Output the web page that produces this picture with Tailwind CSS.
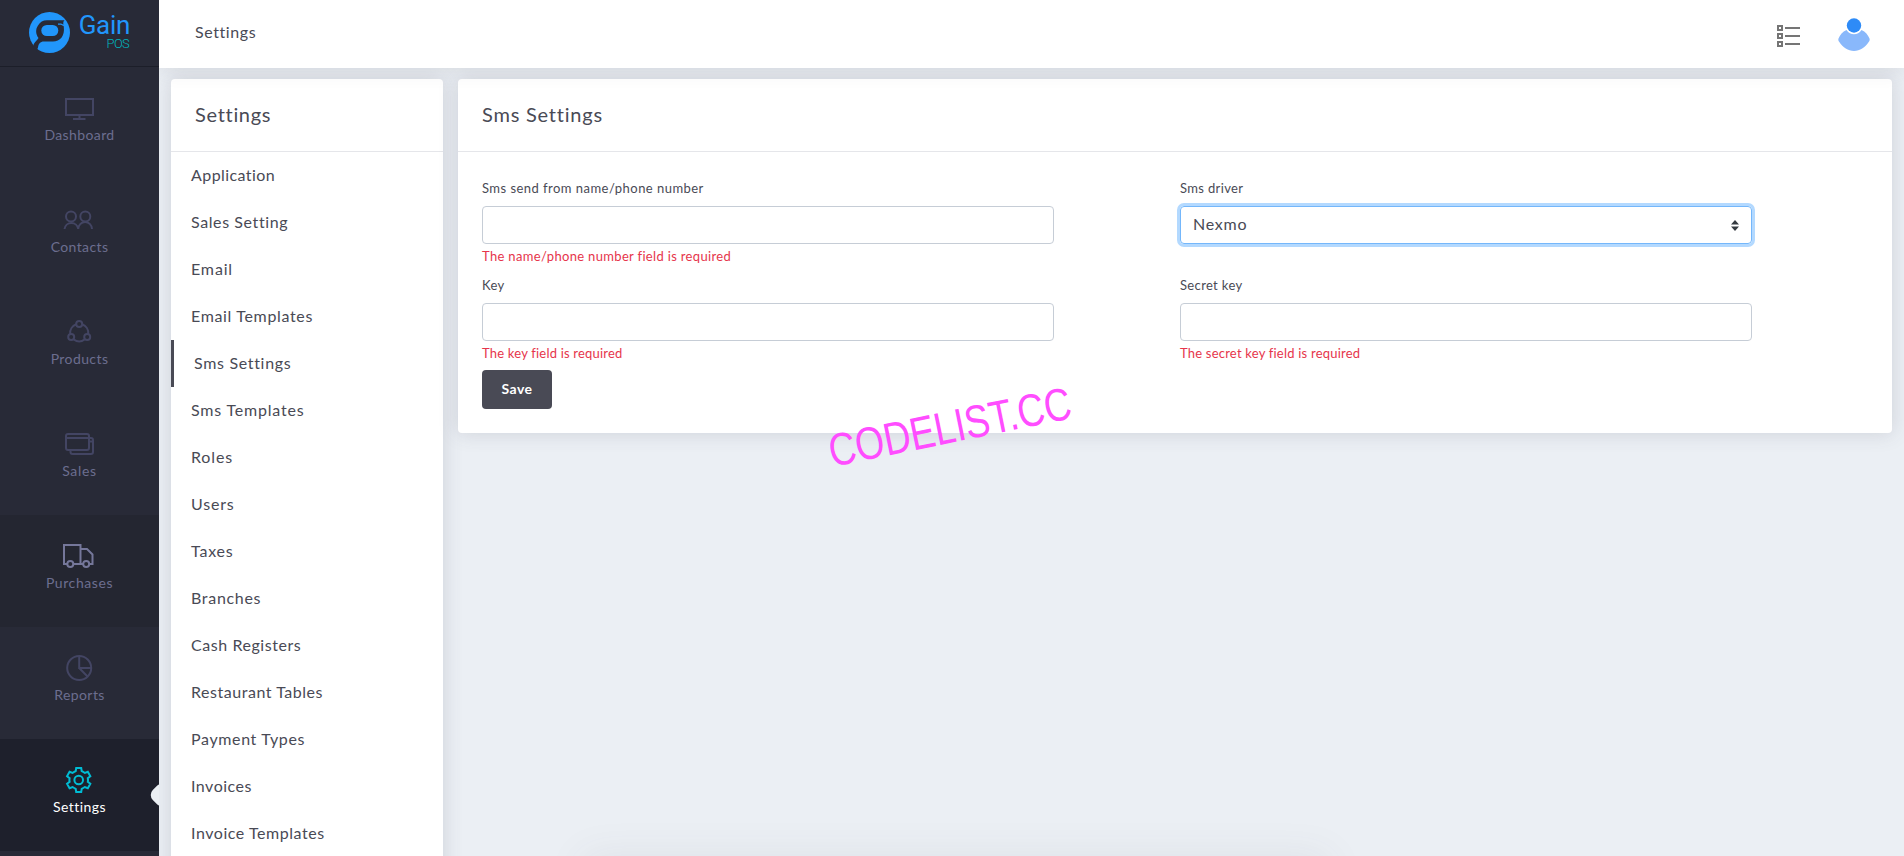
<!DOCTYPE html>
<html lang="en">
<head>
<meta charset="utf-8">
<title>Gain POS - Settings</title>
<script src="https://cdn.jsdelivr.net/npm/@tailwindcss/browser@4"></script>
</head>
<body class="bg-[#ebeff4] font-[Lato,sans-serif] text-[#494a55] [font-variant-ligatures:none]">
<div class="relative flex h-[856px] w-[1904px] overflow-hidden">
  <aside class="relative z-20 flex w-[159px] shrink-0 flex-col overflow-hidden bg-[#282a37] text-sm leading-5 text-[#6c6e8f]">
    <div class="flex h-[67px] shrink-0 items-start border-b border-[#1c1e29] pt-3 pl-[29px]">
      <svg class="h-[41px] w-[41px]" viewBox="0 0 41 41"><circle cx="20.500" cy="20.500" r="20.500" fill="#2196fb"/><path d="M4.500 34C4 31 8 29 9.500 26C6.500 22 6.500 17 9 13.500C11 10 14 8.200 18 8.200H35.500C34 9 34 11.500 34.800 15C36 24 31 29.500 24 29.500H15C11 29.500 9.500 32 9 35.500L7 40H0Z" fill="#282a37"/><rect x="12.300" y="13" width="17" height="11" rx="5.500" fill="#2196fb"/><path d="M29 12.200H32.200C34.500 13.500 36 13.500 36.500 13" fill="none" stroke="#2196fb" stroke-width="1.200"/></svg>
      <div class="ml-2 flex w-[52px] flex-col items-end font-[Roboto,sans-serif]">
        <span class="text-[26px] leading-[27px] tracking-[-0.3px] text-[#2196fb]">Gain</span>
        <span class="-mt-0.5 mr-px text-[13px] leading-[14px] font-light tracking-[-0.7px] text-[#00b3bd]">POS</span>
      </div>
    </div>
    <a class="flex h-28 shrink-0 flex-col items-center pt-[25px]">
      <svg class="h-8 w-[33px]" viewBox="0 0 33 32" fill="none" stroke="#434563" stroke-width="2"><path d="M3 7H30V23H3ZM16.500 24V27M10 27H22.500"/></svg>
      <span class="mt-px tracking-[0.39px]">Dashboard</span></a>
    <a class="flex h-28 shrink-0 flex-col items-center pt-[25px]">
      <svg class="h-8 w-[33px]" viewBox="0 0 33 32" fill="none" stroke="#434563" stroke-width="2"><circle cx="8" cy="12.500" r="5"/><circle cx="22.300" cy="12.500" r="5"/><path d="M1.500 25A6.900 6.900 0 0 1 15.200 25A6.900 6.900 0 0 1 29 25"/></svg>
      <span class="mt-px tracking-[0.39px]">Contacts</span></a>
    <a class="flex h-28 shrink-0 flex-col items-center pt-[25px]">
      <svg class="h-8 w-[33px]" viewBox="0 0 33 32" fill="none" stroke="#434563" stroke-width="2"><circle cx="16.200" cy="8" r="3"/><circle cx="8.200" cy="21" r="3"/><circle cx="24.200" cy="21" r="3"/><path d="M13.200 8.300A9.400 9.400 0 0 0 7.200 18M19.200 8.300A9.400 9.400 0 0 1 25.200 18M10.800 23.500A9 9 0 0 0 21.600 23.500"/></svg>
      <span class="mt-px tracking-[0.41px]">Products</span></a>
    <a class="flex h-28 shrink-0 flex-col items-center pt-[25px]">
      <svg class="h-8 w-[33px]" viewBox="0 0 33 32" fill="none" stroke="#434563" stroke-width="2"><rect x="3" y="6" width="23" height="16" rx="2"/><path d="M4 10H25M26 10H28Q30 10 30 12V24Q30 26 28 26H9.500Q7.500 26 7.500 24V22M26 13.500H30"/></svg>
      <span class="mt-px tracking-[0.7px]">Sales</span></a>
    <a class="flex h-28 shrink-0 flex-col items-center bg-[#242631] pt-[25px]">
      <svg class="h-8 w-[33px]" viewBox="0 0 33 32" fill="none" stroke="#75779a" stroke-width="2"><path d="M4.300 24H1V5H17.500V24M10.300 24H20M17.500 9H24L29.500 14.500V24H26.500"/><circle cx="7.300" cy="24" r="3"/><circle cx="23.200" cy="24" r="3"/></svg>
      <span class="mt-px tracking-[0.58px]">Purchases</span></a>
    <a class="flex h-28 shrink-0 flex-col items-center pt-[25px]">
      <svg class="h-8 w-[33px]" viewBox="0 0 33 32" fill="none" stroke="#434563" stroke-width="2"><circle cx="16.200" cy="16" r="12"/><path d="M16.200 4V16H28M16.200 16L24.500 24.500"/></svg>
      <span class="mt-px tracking-[0.43px]">Reports</span></a>
    <a class="relative flex h-28 shrink-0 flex-col items-center bg-[#1e202c] pt-[25px] text-white">
      <svg class="h-8 w-[33px]" viewBox="0 0 33 32" fill="none" stroke="#00bcd4" stroke-width="2"><g transform="translate(15.700 16)"><circle r="4.300"/><path d="M-2.500-12H2.500L3-8.800Q4.500-8 6.120-7L9.140-8.170L11.640-3.830L9.120-1.800Q9.500 0 9.120 1.800L11.640 3.830L9.140 8.170L6.120 7Q4.500 8 3 8.800L2.500 12H-2.500L-3 8.800Q-4.500 8-6.120 7L-9.140 8.170L-11.640 3.830L-9.120 1.800Q-9.500 0-9.120-1.800L-11.640-3.830L-9.140-8.170L-6.120-7Q-4.500-8-3-8.800Z"/></g></svg>
      <span class="mt-px tracking-[0.47px]">Settings</span>
      <i class="absolute top-[46px] -right-[13px] size-5 rotate-45 rounded-[7px] bg-[#ebeff4]"></i></a>
  </aside>
  <div class="flex flex-1 flex-col">
    <header class="relative z-10 flex h-[68px] shrink-0 items-center bg-white pr-[33px] pl-9 shadow-[0_0_20px_rgba(73,74,85,0.140)]">
      <h1 class="-mt-1 flex-1 pb-px text-base leading-6 tracking-[0.59px]">Settings</h1>
      <svg class="mt-1 h-6 w-6" viewBox="0 0 24 24" fill="none" stroke="#757575" stroke-width="2"><path d="M2 2H6V6H2ZM2 10H6V14H2ZM2 18H6V22H2ZM9 4H24M9 12H24M9 20H24"/></svg>
      <svg class="ml-[37px] h-[34px] w-[34px]" viewBox="0 0 34 34"><path d="M9.500 13C5.500 14.500 3 18 1.500 21.500C1 23 1.500 24 2.300 25C6 30.500 11 34 17 34S28 30.500 31.700 25C32.500 24 33 23 32.500 21.500C31 18 28.500 14.500 24.500 13C22.500 16 20 17.300 17 17.300S11.500 16 9.500 13Z" fill="#89b8fb"/><circle cx="17" cy="8.500" r="7.200" fill="#2e8bf7"/></svg>
    </header>
    <main class="flex items-start gap-[15px] pt-[11px] pl-3">
      <nav class="h-[900px] w-[272px] rounded bg-white text-base leading-[23px] shadow-[0_0_20px_rgba(73,74,95,0.180)]">
        <h2 class="flex h-[73px] items-center border-b border-[#e5e6ea] pb-0.5 pl-6 text-xl tracking-[0.69px]">Settings</h2>
        <a class="flex h-[47px] items-center pb-0.5 pl-5 tracking-[0.43px]">Application</a>
        <a class="flex h-[47px] items-center pb-0.5 pl-5 tracking-[0.6px]">Sales Setting</a>
        <a class="flex h-[47px] items-center pb-0.5 pl-5 tracking-[0.85px]">Email</a>
        <a class="flex h-[47px] items-center pb-0.5 pl-5 tracking-[0.66px]">Email Templates</a>
        <a class="flex h-[47px] items-center border-l-3 border-[#494a55] pb-0.5 pl-5 tracking-[0.68px]">Sms Settings</a>
        <a class="flex h-[47px] items-center pb-0.5 pl-5 tracking-[0.8px]">Sms Templates</a>
        <a class="flex h-[47px] items-center pb-0.5 pl-5 tracking-[0.85px]">Roles</a>
        <a class="flex h-[47px] items-center pb-0.5 pl-5 tracking-[0.8px]">Users</a>
        <a class="flex h-[47px] items-center pb-0.5 pl-5 tracking-[0.8px]">Taxes</a>
        <a class="flex h-[47px] items-center pb-0.5 pl-5 tracking-[0.69px]">Branches</a>
        <a class="flex h-[47px] items-center pb-0.5 pl-5 tracking-[0.56px]">Cash Registers</a>
        <a class="flex h-[47px] items-center pb-0.5 pl-5 tracking-[0.53px]">Restaurant Tables</a>
        <a class="flex h-[47px] items-center pb-0.5 pl-5 tracking-[0.64px]">Payment Types</a>
        <a class="flex h-[47px] items-center pb-0.5 pl-5 tracking-[0.5px]">Invoices</a>
        <a class="flex h-[47px] items-center pb-0.5 pl-5 tracking-[0.55px]">Invoice Templates</a>
      </nav>
      <section class="h-[354px] w-[1434px] rounded bg-white shadow-[0_0_20px_rgba(73,74,95,0.180)]">
        <h2 class="flex h-[73px] items-center border-b border-[#e5e6ea] pb-0.5 pl-6 text-xl tracking-[0.78px]">Sms Settings</h2>
        <form class="px-6 pt-[26px] text-[13px] leading-5">
          <div class="grid grid-cols-[572px_572px] gap-x-[126px]">
            <div class="h-[97px]">
              <label class="block tracking-[0.46px]">Sms send from name/phone number</label>
              <div class="mt-2 h-[38px] rounded border border-[#c6cdd6]"></div>
              <p class="mt-0.5 tracking-[0.33px] text-[#e6354b]">The name/phone number field is required</p>
            </div>
            <div class="h-[97px]">
              <label class="block tracking-[0.35px]">Sms driver</label>
              <div class="mt-2 flex h-[38px] items-center justify-between rounded border border-[#74b7fb] px-3 text-base shadow-[0_0_0_3px_#b3d9ff]"><span class="pb-0.5 tracking-[0.74px]">Nexmo</span><svg class="h-[11px] w-2" viewBox="0 0 8 11" fill="#343a40"><path d="M4 0L8 4.500H0ZM4 11L0 6.500H8Z"/></svg></div>
            </div>
            <div class="h-[95px]">
              <label class="block tracking-[0.39px]">Key</label>
              <div class="mt-2 h-[38px] rounded border border-[#c6cdd6]"></div>
              <p class="mt-0.5 tracking-[0.2px] text-[#e6354b]">The key field is required</p>
            </div>
            <div class="h-[95px]">
              <label class="block tracking-[0.35px]">Secret key</label>
              <div class="mt-2 h-[38px] rounded border border-[#c6cdd6]"></div>
              <p class="mt-0.5 tracking-[0.21px] text-[#e6354b]">The secret key field is required</p>
            </div>
          </div>
          <button type="button" class="flex h-[39px] w-[70px] items-center justify-center rounded bg-[#494a55] pb-0.5 text-sm font-bold tracking-[0.4px] text-white">Save</button>
        </form>
      </section>
    </main>
  </div>
  <div class="absolute top-[856px] left-[583px] h-10 w-[746px] shadow-[0_0_40px_rgba(73,74,85,0.080)]"></div>
  <div class="absolute top-[403px] left-[798px] z-30 w-[300px] text-center font-['Liberation_Sans',Arial,sans-serif] text-[46px] leading-[48px] whitespace-nowrap text-[#ff4dff] [transform:rotate(-11.500deg)_scaleX(.810)]">CODELIST.CC</div>
</div>
</body>
</html>
